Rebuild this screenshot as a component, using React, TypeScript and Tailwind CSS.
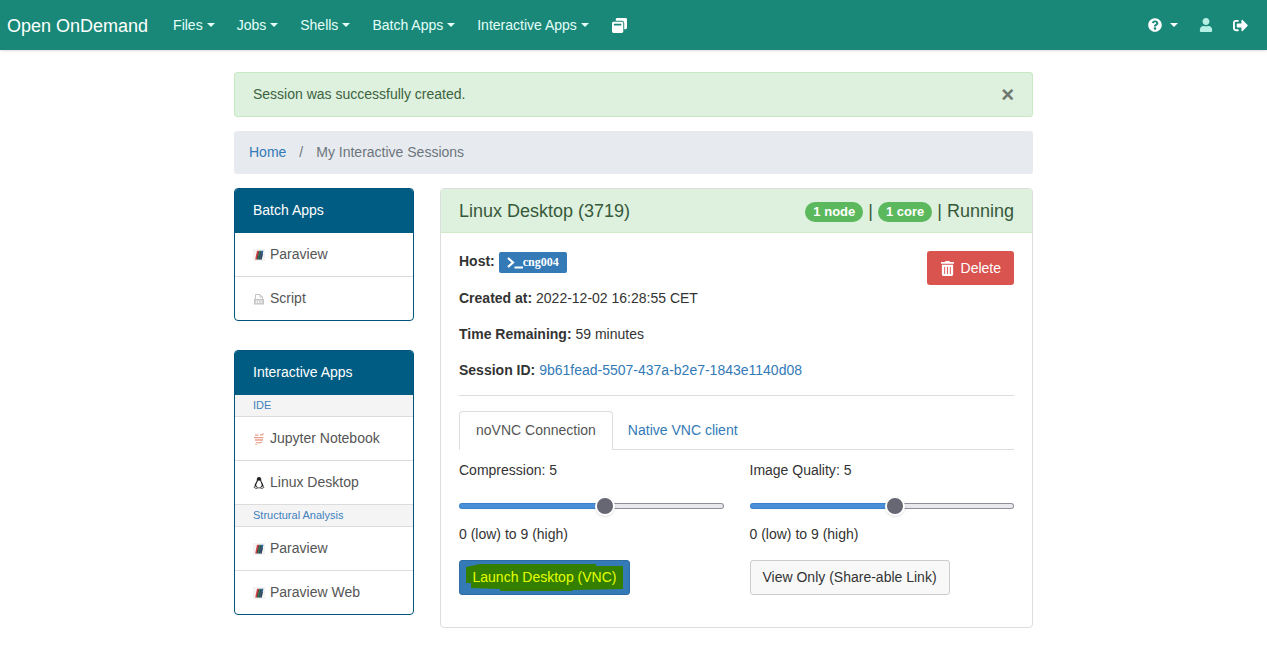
import React, { useState } from "react";
import { FaQuestionCircle, FaSignOutAlt, FaTrashAlt, FaUser, FaWindowRestore } from "react-icons/fa";

const Caret = () => (
  <span className="ml-1 inline-block border-x-4 border-t-4 border-x-transparent border-t-current align-middle" />
);

const MENUS = ["Files", "Jobs", "Shells", "Batch Apps", "Interactive Apps"];

function Navbar() {
  return (
    <nav className="flex h-[50px] items-center bg-[#198878] pr-[19px] pl-[7px] text-white shadow-sm">
      <a href="#" className="mr-[14px] pt-[2px] text-[18px] leading-6">Open OnDemand</a>
      <ul className="flex flex-1 items-center">
        {MENUS.map((name) => (
          <li key={name}>
            <button type="button" className="flex items-center px-[11px] text-[14px] leading-5 whitespace-nowrap text-[#e4fffa]">
              {name}
              <Caret />
            </button>
          </li>
        ))}
        <li>
          <a href="#" aria-label="My interactive sessions" className="block px-3">
            <FaWindowRestore className="size-[15px]" />
          </a>
        </li>
      </ul>
      <ul className="flex items-center">
        <li>
          <button type="button" aria-label="Help" className="flex items-center px-[11px]">
            <FaQuestionCircle className="mr-1 size-[14px]" />
            <Caret />
          </button>
        </li>
        <li>
          <a href="#" aria-label="User" className="block px-[10px] text-[#b6f0e4]">
            <FaUser className="size-[14px]" />
          </a>
        </li>
        <li className="pl-[10px]">
          <a href="#" aria-label="Log out" className="block">
            <FaSignOutAlt className="size-[15px]" />
          </a>
        </li>
      </ul>
    </nav>
  );
}

const ParaviewIcon = () => (
  <svg viewBox="0 0 12 12" className="size-3" aria-hidden="true">
    <rect width="12" height="12" fill="#f3f3f3" />
    <path d="M4 1.8H6.2L4.4 10.5H2.2z" fill="#d8434a" />
    <path d="M6.2 1.8H8.2L6.4 10.5H4.4z" fill="#2f7a58" />
    <path d="M8.2 1.8H10.4L8.6 10.5H6.4z" fill="#2d5f94" />
    <path d="M5.6 3L4.2 10.5M7.8 3L6.4 10.5M9.4 5L8.2 10.5" stroke="#333" strokeWidth=".8" />
  </svg>
);

const ScriptIcon = () => (
  <svg viewBox="0 0 12 12" className="size-3" fill="none" stroke="#c4c4c4" aria-hidden="true">
    <path d="M2.5 6V1.5H7L9.5 4V6M7 1.5V4H9.5" />
    <rect x="1.5" y="6.5" width="9" height="4.5" fill="#d4d4d4" />
    <path d="M3.5 7.5V10M5.5 7.5V10M8 7.5V10" stroke="#f4f4f4" />
  </svg>
);

const JupyterIcon = () => (
  <svg viewBox="0 0 12 12" className="size-3" fill="none" stroke="#e9a08a" aria-hidden="true">
    <path d="M2 2.2H5.5M7 1.8H10M3 9.2Q6 10.6 9 9" strokeWidth="1.2" />
    <path d="M1 4.6H10.5M2 7H10" strokeWidth="1.4" />
    <circle cx="10" cy="1" r=".8" fill="#e9a08a" stroke="none" />
    <circle cx="3" cy="11.2" r=".8" fill="#e9a08a" stroke="none" />
  </svg>
);

const TuxIcon = () => (
  <svg viewBox="0 0 12 12" className="size-3" aria-hidden="true">
    <path d="M6 0C4.2 0 3.7 1.4 3.8 3.2 3.6 4.9 1.8 6.3 1.6 8.6L.6 10.4 3.4 12 4.8 11.2H7.3L8.7 12 11.4 10.4 10.4 8.6C10.2 6.4 8.4 5.2 8.3 3.2 8.3 1.4 7.8 0 6 0z" fill="#222" />
    <path d="M5 3.2L6 3.9 7.1 3.2C7.3 5.2 8.9 6.4 8.7 8.6L7.4 10.4H4.7L3.2 8.6C3 6.6 4.8 5.2 5 3.2z" fill="#fff" />
    <path d="M1.8 9L4.4 10.8 3.5 11.5 1.2 10.3zM10.2 9L7.7 10.8 8.5 11.5 10.8 10.3z" fill="#ddd" />
  </svg>
);

type Row = { label: string; icon?: React.ReactNode };

function AppCard({ title, rows }: { title: string; rows: Row[] }) {
  return (
    <section className="overflow-hidden rounded border border-[#00537c]">
      <h2 className="bg-[#005c82] px-[18px] pt-[11px] pb-3 text-[14px] leading-[21px] text-white">{title}</h2>
      <ul className="divide-y divide-[#dcdcdc]">
        {rows.map(({ label, icon }) =>
          icon ? (
            <li key={label}>
              <a href="#" className="flex items-center px-[18px] py-[11px] text-[14px] leading-[21px] text-[#555]">
                <span className="mr-[5px]">{icon}</span>
                {label}
              </a>
            </li>
          ) : (
            <li key={label} className="bg-[#f4f4f4] px-[18px] py-[3px] text-[11px] leading-[15px] text-[#4081bd]">{label}</li>
          )
        )}
      </ul>
    </section>
  );
}

function Slider({ id, label }: { id: string; label: string }) {
  const [value, setValue] = useState(5);
  const pct = (value / 9) * 100;
  const split = (on: string, off: string, box: string) =>
    `linear-gradient(to right, ${on} ${pct}%, ${off} ${pct}%) ${box}`;
  return (
    <div>
      <label htmlFor={id} className="block">{label}: {value}</label>
      <input
        id={id}
        type="range"
        min={0}
        max={9}
        value={value}
        onChange={(e) => setValue(Number(e.target.value))}
        style={{ background: `${split("#4a90d9", "#e9e9ed", "padding-box")}, ${split("#3a80ca", "#8f8f9d", "border-box")}` }}
        className="mt-[22px] mb-[15px] block h-[6px] w-full appearance-none rounded-full border border-transparent [&::-webkit-slider-thumb]:size-5 [&::-webkit-slider-thumb]:appearance-none [&::-webkit-slider-thumb]:rounded-full [&::-webkit-slider-thumb]:border-2 [&::-webkit-slider-thumb]:border-white [&::-webkit-slider-thumb]:bg-[#676774] [&::-webkit-slider-thumb]:shadow"
      />
      <p>0 (low) to 9 (high)</p>
    </div>
  );
}

const Badge = ({ children }: { children: React.ReactNode }) => (
  <span className="rounded-full bg-[#5cb85c] px-2 text-[13px] leading-5 font-bold text-white">{children}</span>
);

function Session() {
  return (
    <section className="min-w-0 flex-1 rounded border border-[#ddd]">
      <header className="flex items-center justify-between border-b border-[#d0e9c6] bg-[#def0de] px-[18px] pt-[2px] text-[18px] leading-[41px] text-[#35593a]">
        <h1>Linux Desktop (3719)</h1>
        <div className="flex items-center gap-[5px]">
          <Badge>1 node</Badge>|<Badge>1 core</Badge>
          <span>| Running</span>
        </div>
      </header>
      <div className="px-[18px] pt-[18px] pb-8">
        <div className="flex items-start justify-between">
          <div className="flex flex-col gap-[15px]">
            <p className="flex">
              <strong className="mr-1">Host:</strong>
              <a href="#" className="mt-[1px] flex h-[21px] items-center rounded-[2px] bg-[#337ab7] px-2 font-['Liberation_Serif',serif] text-[12px] font-bold text-white">
                <svg viewBox="0 0 16 12" className="h-3 w-4" fill="none" stroke="currentColor" strokeWidth="2.2" aria-hidden="true">
                  <path d="M1 1L6 5.5 1 10M7.5 10.5H16" />
                </svg>
                cng004
              </a>
            </p>
            <p><strong>Created at:</strong> 2022-12-02 16:28:55 CET</p>
            <p><strong>Time Remaining:</strong> 59 minutes</p>
            <p><strong>Session ID:</strong> <a href="#" className="text-[#337ab7]">9b61fead-5507-437a-b2e7-1843e1140d08</a></p>
          </div>
          <button type="button" className="flex h-[34px] items-center gap-[6px] rounded-[3px] bg-[#d9534f] px-[13px] text-white">
            <FaTrashAlt className="size-[15px]" />
            Delete
          </button>
        </div>
        <hr className="mt-[14px] mb-[15px] border-[#ddd]" />
        <div role="tablist" className="flex border-b border-[#ddd]">
          <button type="button" role="tab" aria-selected="true" className="-mb-px rounded-t border border-b-0 border-[#ddd] bg-white px-4 pt-2 pb-[9px] text-[#555]">noVNC Connection</button>
          <button type="button" role="tab" aria-selected="false" className="px-[15px] pt-2 pb-2 text-[#337ab7]">Native VNC client</button>
        </div>
        <div className="mt-[10px] grid grid-cols-2 items-start gap-x-[26px] gap-y-[15px]">
          <Slider id="compression" label="Compression" />
          <Slider id="quality" label="Image Quality" />
          <button type="button" className="relative h-[35px] w-[171px] rounded-[3px] border border-[#2e6da4] bg-[#337ab7] text-[#e4ff00]">
            <svg viewBox="0 0 171 35" className="absolute -inset-px h-[35px] w-[171px]" aria-hidden="true">
              <path d="M7 7L21 4H137V6H164V29L114 30 113 31H41V29L12 28V23H7z" fill="#347f00" />
            </svg>
            <span className="relative">Launch Desktop (VNC)</span>
          </button>
          <button type="button" className="h-[35px] justify-self-start rounded-[3px] border border-[#ccc] bg-[#f8f8f8] px-3">View Only (Share-able Link)</button>
        </div>
      </div>
    </section>
  );
}

export default function App() {
  return (
    <div className="min-h-screen bg-white font-['Liberation_Sans',Arial,sans-serif] text-[14px] leading-[21px] text-[#333]">
      <Navbar />
      <main className="mx-auto mt-[22px] flex max-w-[799px] flex-col gap-[14px]">
        <div role="alert" className="flex items-center justify-between rounded-[3px] border border-[#c9e8c4] bg-[#def0de] px-[18px] py-[11px] text-[#3c6340]">
          Session was successfully created.
          <button type="button" aria-label="Close" className="text-[22px] leading-[21px] font-bold text-[#6f786f]">×</button>
        </div>
        <nav aria-label="Breadcrumb" className="flex rounded-[3px] bg-[#e7ebef] px-[15px] py-[11px] text-[#6c757d]">
          <a href="#" className="text-[#337ab7]">Home</a>
          <span className="mx-[13px]">/</span>
          <span>My Interactive Sessions</span>
        </nav>
        <div className="flex items-start gap-[26px]">
          <aside className="flex w-[180px] shrink-0 flex-col gap-[29px]">
            <AppCard
              title="Batch Apps"
              rows={[{ label: "Paraview", icon: <ParaviewIcon /> }, { label: "Script", icon: <ScriptIcon /> }]}
            />
            <AppCard
              title="Interactive Apps"
              rows={[
                { label: "IDE" },
                { label: "Jupyter Notebook", icon: <JupyterIcon /> },
                { label: "Linux Desktop", icon: <TuxIcon /> },
                { label: "Structural Analysis" },
                { label: "Paraview", icon: <ParaviewIcon /> },
                { label: "Paraview Web", icon: <ParaviewIcon /> },
              ]}
            />
          </aside>
          <Session />
        </div>
      </main>
    </div>
  );
}
